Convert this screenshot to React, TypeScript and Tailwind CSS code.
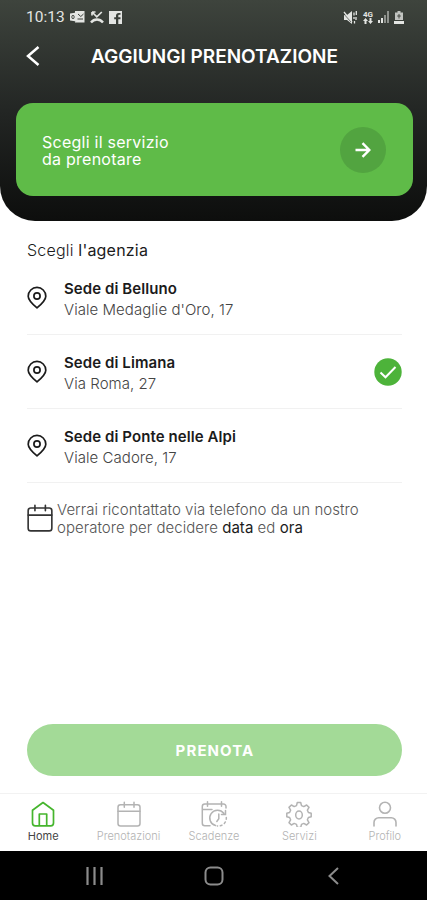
import React, { useState } from 'react';

interface Agency {
  id: string;
  name: string;
  address: string;
}

const agencies: Agency[] = [
  { id: 'belluno', name: 'Sede di Belluno', address: "Viale Medaglie d'Oro, 17" },
  { id: 'limana', name: 'Sede di Limana', address: 'Via Roma, 27' },
  { id: 'ponte', name: 'Sede di Ponte nelle Alpi', address: 'Viale Cadore, 17' },
];

const tabs = [
  { label: 'Home', icon: <HomeIcon /> },
  { label: 'Prenotazioni', icon: <CalendarIcon className="w-[26px] h-[26px]" /> },
  { label: 'Scadenze', icon: <DeadlineIcon /> },
  { label: 'Servizi', icon: <GearIcon /> },
  { label: 'Profilo', icon: <ProfileIcon /> },
];

function HomeIcon() {
  return (
    <svg viewBox="0 0 26 26" className="w-[26px] h-[26px]" fill="none" stroke="currentColor" strokeWidth="1.7" strokeLinejoin="round">
      <path d="M2.5 9.2 13 1.5l10.500 7.700V22a2.800 2.800 0 0 1-2.800 2.800H5.300A2.800 2.800 0 0 1 2.500 22Z" />
      <path d="M9.300 24.800V13h7.400v11.800" />
    </svg>
  );
}

function CalendarIcon({ className }: { className: string }) {
  return (
    <svg viewBox="0 0 26 26" className={className} fill="none" stroke="currentColor" strokeWidth="1.5" strokeLinecap="round">
      <rect x="2" y="3.700" width="22" height="21.300" rx="2.500" />
      <path d="M2 10.300h22M8.300 1.200v5M18 1.200v5" />
    </svg>
  );
}

function DeadlineIcon() {
  return (
    <svg viewBox="0 0 28 28" className="w-[28px] h-[28px]" fill="none" stroke="currentColor" strokeWidth="1.5" strokeLinecap="round">
      <path d="M10 25.700H4.800A2.500 2.500 0 0 1 2.300 23.200V6.500A2.500 2.500 0 0 1 4.800 4h18.700a2.500 2.500 0 0 1 2.500 2.500V8M2.300 9.500H12M7.500 1.700v4.600M21.500 1.700v4.600" />
      <path d="M15.500 25.500a7.800 7.800 0 1 1 8.300-12.200M25.500 10.500v4h-4M18.800 14v4.800l-2 2.700" />
      <path d="M26.300 17.500a7.800 7.800 0 0 1-9 8.400" strokeDasharray="1.800 2.800" />
    </svg>
  );
}

function GearIcon() {
  return (
    <svg viewBox="0 0 26 26" className="w-[26px] h-[26px]" fill="none" stroke="currentColor" strokeWidth="1.5" strokeLinejoin="round">
      <path d="M11.300 1.500h3.400l.8 3.100 2.300 1 2.800-1.600 2.400 2.400-1.600 2.800 1 2.300 2.800.8v3.400l-2.800.8-1 2.300 1.600 2.800-2.400 2.400-2.800-1.600-2.300 1-.8 3.100h-3.400l-.8-3.100-2.300-1-2.800 1.600-2.400-2.400 1.600-2.800-1-2.300-2.800-.8v-3.400l2.800-.8 1-2.300-1.600-2.800 2.400-2.400 2.800 1.600 2.300-1Z" />
      <ellipse cx="13" cy="14" rx="3.300" ry="3.900" />
    </svg>
  );
}

function ProfileIcon() {
  return (
    <svg viewBox="0 0 26 26" className="w-[26px] h-[26px]" fill="none" stroke="currentColor" strokeWidth="1.600" strokeLinecap="round">
      <circle cx="13" cy="6.800" r="5.500" />
      <path d="M2 25v-3.500A4.700 4.700 0 0 1 6.700 16.800h12.600a4.700 4.700 0 0 1 4.700 4.700V25" />
    </svg>
  );
}

function PinIcon() {
  return (
    <svg viewBox="0 0 20 24" className="w-5 h-6 shrink-0" fill="none" stroke="#1b1b1b" strokeWidth="1.700" strokeLinejoin="round">
      <path d="M18.800 10.200c0 3.700-2.600 6.500-8.800 11.700C3.800 16.700 1.200 13.900 1.200 10.200a8.800 8.800 0 0 1 17.600 0Z" />
      <circle cx="10" cy="10" r="3.100" />
    </svg>
  );
}

function StatusBar() {
  return (
    <div className="flex h-[34px] items-center justify-between pl-[26px] pr-[23px] text-[#e3e5e2]">
      <div className="flex items-center">
        <span className="w-[39px] whitespace-nowrap pt-[2px] font-['Roboto',sans-serif] text-[15.500px] leading-none">10:13</span>
        {/* outlook, missed call, facebook */}
        <svg viewBox="0 0 15 12" className="ml-[5px] h-3 w-[15px]" fill="currentColor">
          <path d="M5 0h9.500v11.500H5zM0 2.500 6.500 1.500v9L0 9.500z" />
          <ellipse cx="3" cy="6" rx="1.200" ry="1.700" fill="none" stroke="#3a3f39" strokeWidth=".9" />
          <path d="M7.500 8h5.500M8 3l2.800 2.500L13.500 3" fill="none" stroke="#3a3f39" strokeWidth="1" />
        </svg>
        <svg viewBox="0 0 14 13" className="ml-[5px] h-[13px] w-[14px]" fill="none" stroke="currentColor" strokeWidth="1.700">
          <path d="m2.500 1.500 4.300 4.300 5-4.800M2 1v3.500M2 1h3.500" />
          <path d="M1 11.500c3.200-4 8.800-4 12 0" strokeWidth="2.400" />
        </svg>
        <svg viewBox="0 0 13 13" className="ml-[5px] h-[13px] w-[13px]" fill="currentColor">
          <path d="M0 0h13v13H9.300V8.300h2.200V6.200H9.300V4.800c0-.7.300-1 1-1h1.200V1.900H9.800C7.900 1.900 7 3 7 4.700v1.500H5.200v2.100H7V13H0z" />
        </svg>
      </div>
      <div className="flex items-center">
        <svg viewBox="0 0 14 13" className="h-[13px] w-[14px]" fill="currentColor">
          <path d="M1 4h3l5-4v13L4 9H1z" />
          <path d="M1 1l8 10M11 1.500v3M13.300 0v4M11 6v2M13 6v3M11.500 10v2.500" stroke="currentColor" strokeWidth="1.300" />
          <path d="m0 2 8 9" stroke="#3a3f39" strokeWidth=".7" />
        </svg>
        <span className="ml-[5px] flex w-3 flex-col items-center font-['Roboto',sans-serif] text-[8px] font-bold leading-[7px]">
          <span>4G</span>
          <svg viewBox="0 0 10 6" className="h-1.5 w-2.5" fill="currentColor">
            <path d="M2.500 0 5 3H3.500v3h-2V3H0zM7.500 6 5 3h1.500V0h2v3H10z" />
          </svg>
        </span>
        <svg viewBox="0 0 12 12" className="ml-[4px] h-3 w-3" fill="currentColor">
          <path d="M0 9h2v3H0zM3 7h2v5H3z" />
          <path d="M6 4h2v8H6zM9 0h2v12H9z" opacity=".5" />
        </svg>
        <svg viewBox="0 0 10 13" className="ml-[4px] h-[13px] w-2.5" fill="currentColor">
          <path d="M3.500 0h3v1.500H9V9H1V1.500h2.500z" opacity=".8" />
          <path d="M0 10h10v3H0z" />
          <path d="M5 3v4.500M3.200 5h3.600" stroke="#3a3f39" strokeWidth=".9" />
        </svg>
      </div>
    </div>
  );
}

export default function App() {
  const [selected, setSelected] = useState('limana');
  const [activeTab, setActiveTab] = useState('Home');

  return (
    <div className="flex h-[900px] w-[427px] flex-col overflow-hidden bg-white font-['Inter',sans-serif] text-[#1b1b1b]">
      <header className="h-[221px] shrink-0 rounded-b-[35px] bg-linear-to-b from-[#3e443d] via-[#232624] via-50% to-[#0d0e0d]">
        <StatusBar />
        <div className="flex h-[44px] items-center">
          <button type="button" aria-label="Indietro" className="ml-[26px] w-[65px]">
            <svg viewBox="0 0 14 20" className="h-5 w-[14px]" fill="none" stroke="white" strokeWidth="2.500">
              <path d="M12.500 1 2 10l10.500 9" />
            </svg>
          </button>
          <h1 className="whitespace-nowrap pt-[2px] text-[19px] font-semibold text-white">AGGIUNGI PRENOTAZIONE</h1>
        </div>
        <button type="button" className="mx-[15.500px] mt-[25px] flex h-[93px] w-[397px] items-center justify-between rounded-[17px] bg-[#5fbb48] pl-[26.500px] pr-[27px] text-left">
          <span className="flex flex-col pt-[2px] text-[16px] leading-[17px] tracking-[0.250px] text-white">
            <span>Scegli il servizio</span>
            <span>da prenotare</span>
          </span>
          <span className="flex h-[46px] w-[46px] items-center justify-center rounded-full bg-[#52a440]">
            <svg viewBox="0 0 16 16" className="h-4 w-4" fill="none" stroke="white" strokeWidth="2.400">
              <path d="M.5 8h14M7.500 1.200 14.300 8l-6.800 6.800" />
            </svg>
          </span>
        </button>
      </header>

      <main className="flex-1 pl-[27px] pr-[25px]">
        <h2 className="pt-[18px] text-[16px] font-light leading-[22px] tracking-[0.200px]">
          Scegli <span className="font-normal">l'agenzia</span>
        </h2>

        <ul>
          {agencies.map((agency) => (
            <li key={agency.id} className="border-b border-[#f1f1f1]">
              <button type="button" onClick={() => setSelected(agency.id)} className="flex h-[73px] w-full items-center text-left">
                <PinIcon />
                <span className="ml-[17px] flex flex-1 flex-col pt-[2px]">
                  <span className="text-[15px] font-semibold leading-[21px] tracking-[0.080px]">{agency.name}</span>
                  <span className="text-[15px] font-light leading-[21px] tracking-[0.050px] text-[#444]">{agency.address}</span>
                </span>
                {selected === agency.id && (
                  <svg viewBox="0 0 28 28" className="h-7 w-7">
                    <circle cx="14" cy="14" r="13.700" fill="#4db33a" />
                    <path d="m6.500 14.500 5 4.800L21.500 9" fill="none" stroke="white" strokeWidth="2" />
                  </svg>
                )}
              </button>
            </li>
          ))}
        </ul>

        <div className="mt-[18px] flex items-center">
          <CalendarIcon className="-ml-[1.500px] mb-[2px] h-[28px] w-[28px] shrink-0 text-[#333]" />
          <p className="ml-[3.500px] flex flex-col whitespace-nowrap text-[15px] font-light leading-[18px] tracking-[0.040px] text-[#555]">
            <span>Verrai ricontattato via telefono da un nostro</span>
            <span>
              operatore per decidere <span className="font-normal text-[#1b1b1b]">data</span> ed{' '}
              <span className="font-normal text-[#1b1b1b]">ora</span>
            </span>
          </p>
        </div>
      </main>

      <div className="pl-[26.500px] pr-[25.500px] pb-[17px]">
        <button type="button" className="h-[52px] w-full rounded-full bg-[#a3da97] pl-[2px] pt-[2px] text-[15px] font-bold tracking-[1.100px] text-white">
          PRENOTA
        </button>
      </div>

      <nav className="grid h-[58px] shrink-0 grid-cols-5 border-t border-[#f2f2f2]">
        {tabs.map((tab) => (
          <button
            key={tab.label}
            type="button"
            onClick={() => setActiveTab(tab.label)}
            className={`flex flex-col items-center pl-px pt-[6px] ${activeTab === tab.label ? 'text-[#45b52d]' : 'text-[#b3b3b3]'}`}
          >
            <span className="flex h-[28px] items-center">{tab.icon}</span>
            <span className={`text-[11px] leading-[16px] ${activeTab === tab.label ? 'text-[#444]' : 'font-light'}`}>{tab.label}</span>
          </button>
        ))}
      </nav>

      {/* Android system buttons */}
      <div className="flex h-[49px] shrink-0 items-center bg-black pl-[86px] text-[#8c8c8c]">
        <svg viewBox="0 0 17 18" className="h-[18px] w-[17px]" stroke="currentColor" strokeWidth="2.200">
          <path d="M1.500 0v18M8.500 0v18M15.500 0v18" />
        </svg>
        <svg viewBox="0 0 20 20" className="ml-[100.500px] h-5 w-5" fill="none" stroke="currentColor" strokeWidth="2">
          <rect x="1.500" y="1.500" width="17" height="17" rx="5" />
        </svg>
        <svg viewBox="0 0 11 18" className="ml-[104.500px] h-[18px] w-[11px]" fill="none" stroke="currentColor" strokeWidth="2">
          <path d="M10 1 1.500 9l8.500 8" />
        </svg>
      </div>
    </div>
  );
}
